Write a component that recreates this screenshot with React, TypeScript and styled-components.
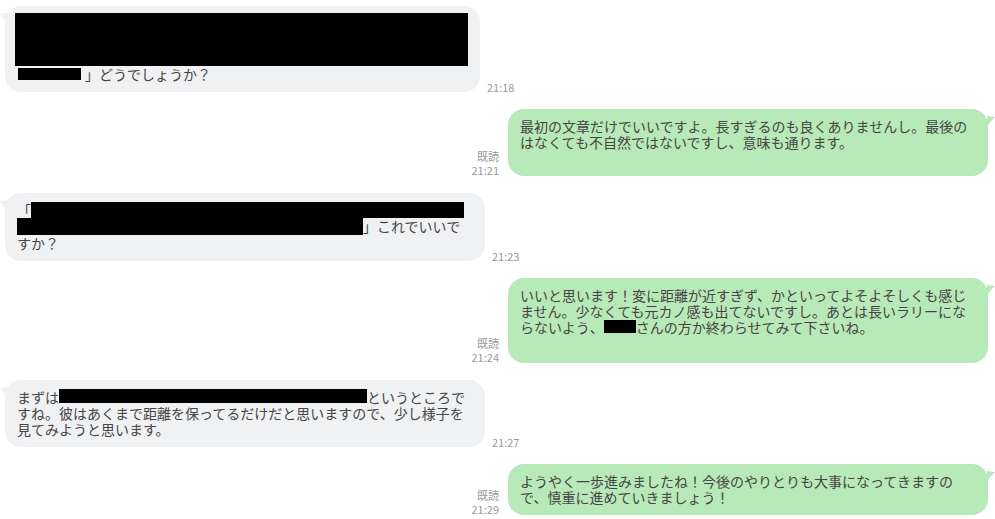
import React from "react";
import styled, { createGlobalStyle } from "styled-components";

const Global = createGlobalStyle`
  html, body { margin: 0; padding: 0; background: #ffffff; }
  body { font-family: "Noto Sans CJK JP", "Noto Sans", sans-serif; }
`;

const Chat = styled.div`
  display: flex;
  flex-direction: column;
  gap: 17px;
  padding: 6px 7px 0 5px;
  width: 995px;
  box-sizing: border-box;
`;

const Row = styled.div<{ $out?: boolean }>`
  display: flex;
  align-items: flex-end;
  justify-content: ${(p) => (p.$out ? "flex-end" : "flex-start")};
  gap: ${(p) => (p.$out ? "9px" : "7px")};
`;

const Bubble = styled.div<{ $out?: boolean; $extra?: number }>`
  position: relative;
  max-width: 480px;
  box-sizing: border-box;
  padding: 9px 12px ${(p) => 10 + (p.$extra ?? 0)}px 12px;
  border-radius: 16px;
  background: ${(p) => (p.$out ? "#b8e9b8" : "#f0f1f3")};
  color: #454545;
  font-size: 14px;
  line-height: 16px;
  line-break: strict;
`;

const Tail = styled.svg<{ $out?: boolean }>`
  position: absolute;
  top: 7px;
  ${(p) => (p.$out ? "right: -7px;" : "left: -6px;")}
  width: 8px;
  height: 12px;
`;

const Meta = styled.div<{ $out?: boolean }>`
  display: flex;
  flex-direction: column;
  align-items: flex-end;
  font-family: "Noto Sans CJK JP", "Liberation Sans", sans-serif;
  font-size: 11px;
  line-height: 14px;
  color: #9a9a9a;
  margin-bottom: ${(p) => (p.$out ? "-1px" : "-2px")};
`;

const Redact = styled.span<{ $w: number; $h: number; $block?: boolean }>`
  display: ${(p) => (p.$block ? "block" : "inline-block")};
  width: ${(p) => p.$w}px;
  height: ${(p) => p.$h}px;
  background: #000;
  vertical-align: top;
`;

const TopBlock = styled(Redact)`
  margin: -2px 0 0 -2px;
`;

const SmallName = styled(Redact)`
  margin: 2px 4px 0 1px;
`;

const InlineName = styled(Redact)`
  margin-top: 1px;
`;

const GrayTail = () => (
  <Tail viewBox="0 0 8 12">
    <path d="M8 0 L0 1 Q5 5 8 11 Z" fill="#f0f1f3" />
  </Tail>
);

const GreenTail = () => (
  <Tail $out viewBox="0 0 8 12">
    <path d="M0 0 L8 1 Q3 5 0 11 Z" fill="#b8e9b8" />
  </Tail>
);

const In: React.FC<{ time: string; children: React.ReactNode }> = ({ time, children }) => (
  <Row>
    <Bubble lang="ja">
      <GrayTail />
      {children}
    </Bubble>
    <Meta>
      <span>{time}</span>
    </Meta>
  </Row>
);

const Out: React.FC<{ time: string; extra?: number; children: React.ReactNode }> = ({
  time,
  extra,
  children,
}) => (
  <Row $out>
    <Meta $out>
      <span>既読</span>
      <span>{time}</span>
    </Meta>
    <Bubble $out $extra={extra} lang="ja">
      <GreenTail />
      {children}
    </Bubble>
  </Row>
);

export default function App() {
  return (
    <>
      <Global />
      <Chat>
        <In time="21:18">
          <TopBlock $w={453} $h={53} $block />
          <SmallName $w={63} $h={12} />」どうでしょうか？
        </In>
        <Out time="21:21" extra={16}>
          最初の文章だけでいいですよ。長すぎるのも良くありませんし。最後のはなくても不自然ではないですし、意味も通ります。
        </Out>
        <In time="21:23">
          「<Redact $w={433} $h={16} />
          <br />
          <Redact $w={346} $h={17} />」これでいいですか？
        </In>
        <Out time="21:24" extra={18}>
          いいと思います！変に距離が近すぎず、かといってよそよそしくも感じません。少なくても元カノ感も出てないですし。あとは長いラリーにならないよう、
          <InlineName $w={32} $h={13} />
          さんの方か終わらせてみて下さいね。
        </Out>
        <In time="21:27">
          まずは<Redact $w={308} $h={14} />
          というところですね。彼はあくまで距離を保ってるだけだと思いますので、少し様子を見てみようと思います。
        </In>
        <Out time="21:29">
          ようやく一歩進みましたね！今後のやりとりも大事になってきますので、慎重に進めていきましょう！
        </Out>
      </Chat>
    </>
  );
}
